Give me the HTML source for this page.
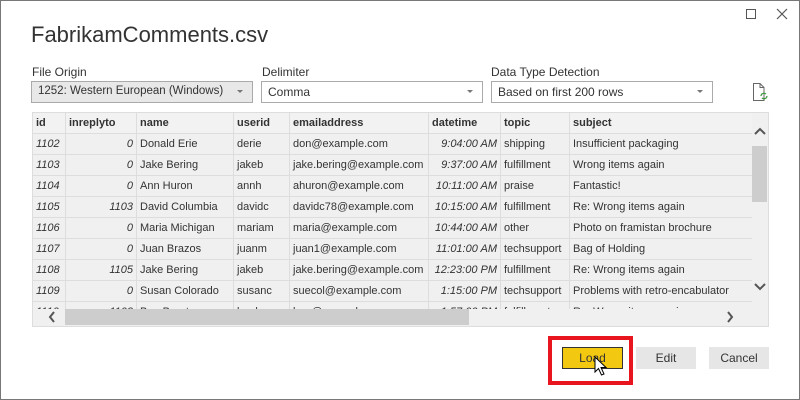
<!DOCTYPE html><html><head><style>
*{margin:0;padding:0;box-sizing:border-box}
body{width:800px;height:400px;background:#fff;font-family:"Liberation Sans",sans-serif;position:relative;overflow:hidden;font-size:11px;color:#333}
.win{position:absolute;left:0;top:0;width:800px;height:400px;border:1px solid #777}
.abs{position:absolute}
.lbl{font-size:12px;color:#333}
.dd{position:absolute;top:81px;height:22px;border:1px solid #aaa;font-size:12px;padding:3px 6px;color:#333;white-space:nowrap;overflow:hidden}
.dd:after{content:"";position:absolute;right:9px;top:8px;border-left:3px solid transparent;border-right:3px solid transparent;border-top:3px solid #777}
table{border-collapse:collapse;position:absolute;left:0;top:0;table-layout:fixed;width:720px}
td,th{height:21px;border:1px solid #ddd;padding:0 3px;white-space:nowrap;overflow:hidden;font-size:11px;text-align:left}
th{background:#f2f2f2;font-weight:bold;color:#333}
td.i{font-style:italic;text-align:right}
td.il{font-style:italic}
.btn{position:absolute;top:347px;height:22px;background:#e6e6e6;font-size:12px;text-align:center;line-height:22px;color:#333}
</style></head><body>
<div class="win"></div>
<div class="abs" style="left:746px;top:9px;width:10px;height:10px;border:1px solid #555"></div>
<svg class="abs" style="left:776px;top:8px" width="12" height="12"><path d="M1 1L11 11M11 1L1 11" stroke="#555" stroke-width="1.2"/></svg>
<div class="abs" style="left:31px;top:22px;font-size:22px;color:#333">FabrikamComments.csv</div>
<div class="abs lbl" style="left:32px;top:65px">File Origin</div>
<div class="abs lbl" style="left:262px;top:65px">Delimiter</div>
<div class="abs lbl" style="left:491px;top:65px">Data Type Detection</div>
<div class="dd" style="left:31px;width:222px;background:#e8e8e8;font-size:11.5px;padding-right:20px">1252: Western European (Windows)</div>
<div class="dd" style="left:261px;width:222px">Comma</div>
<div class="dd" style="left:491px;width:222px">Based on first 200 rows</div>
<svg class="abs" style="left:752px;top:82px" width="18" height="20"><path d="M1.5 1.5H8l4 4V18.5H1.5Z" fill="none" stroke="#666"/><path d="M8 1.5V5.5H12" fill="none" stroke="#666"/><path d="M9 14a3 3 0 0 1 5-2M15 14a3 3 0 0 1-5 2" fill="none" stroke="#3a9a3a" stroke-width="1.2"/></svg>
<div class="abs" style="left:32px;top:112px;width:737px;height:215px;border:1px solid #ddd;background:#f0f0f0"></div>
<div class="abs" style="left:32px;top:112px;width:720px;height:197px;overflow:hidden">
<table>
<colgroup><col style="width:33px"><col style="width:71px"><col style="width:97px"><col style="width:56px"><col style="width:139px"><col style="width:72px"><col style="width:69px"><col style="width:183px"></colgroup>
<tr><th>id</th><th>inreplyto</th><th>name</th><th>userid</th><th>emailaddress</th><th>datetime</th><th>topic</th><th>subject</th></tr>
<tr><td class="il">1102</td><td class="i">0</td><td>Donald Erie</td><td>derie</td><td>don@example.com</td><td class="i">9:04:00 AM</td><td>shipping</td><td>Insufficient packaging</td></tr>
<tr><td class="il">1103</td><td class="i">0</td><td>Jake Bering</td><td>jakeb</td><td>jake.bering@example.com</td><td class="i">9:37:00 AM</td><td>fulfillment</td><td>Wrong items again</td></tr>
<tr><td class="il">1104</td><td class="i">0</td><td>Ann Huron</td><td>annh</td><td>ahuron@example.com</td><td class="i">10:11:00 AM</td><td>praise</td><td>Fantastic!</td></tr>
<tr><td class="il">1105</td><td class="i">1103</td><td>David Columbia</td><td>davidc</td><td>davidc78@example.com</td><td class="i">10:15:00 AM</td><td>fulfillment</td><td>Re: Wrong items again</td></tr>
<tr><td class="il">1106</td><td class="i">0</td><td>Maria Michigan</td><td>mariam</td><td>maria@example.com</td><td class="i">10:44:00 AM</td><td>other</td><td>Photo on framistan brochure</td></tr>
<tr><td class="il">1107</td><td class="i">0</td><td>Juan Brazos</td><td>juanm</td><td>juan1@example.com</td><td class="i">11:01:00 AM</td><td>techsupport</td><td>Bag of Holding</td></tr>
<tr><td class="il">1108</td><td class="i">1105</td><td>Jake Bering</td><td>jakeb</td><td>jake.bering@example.com</td><td class="i">12:23:00 PM</td><td>fulfillment</td><td>Re: Wrong items again</td></tr>
<tr><td class="il">1109</td><td class="i">0</td><td>Susan Colorado</td><td>susanc</td><td>suecol@example.com</td><td class="i">1:15:00 PM</td><td>techsupport</td><td>Problems with retro-encabulator</td></tr>
<tr><td class="il">1110</td><td class="i">1103</td><td>Ben Brent</td><td>benb</td><td>ben@example.com</td><td class="i">1:57:00 PM</td><td>fulfillment</td><td>Re: Wrong items again</td></tr>
</table></div>
<div class="abs" style="left:752px;top:146px;width:15px;height:56px;background:#cdcdcd"></div>
<svg class="abs" style="left:752px;top:126px" width="16" height="12"><path d="M3 8L8 3L13 8" fill="none" stroke="#555" stroke-width="2"/></svg>
<svg class="abs" style="left:752px;top:280px" width="16" height="12"><path d="M3 4L8 9L13 4" fill="none" stroke="#555" stroke-width="2"/></svg>
<div class="abs" style="left:65px;top:309px;width:404px;height:16px;background:#cdcdcd"></div>
<svg class="abs" style="left:46px;top:310px" width="12" height="14"><path d="M8 2L4 7L8 12" fill="none" stroke="#555" stroke-width="2"/></svg>
<svg class="abs" style="left:724px;top:310px" width="12" height="14"><path d="M4 2L8 7L4 12" fill="none" stroke="#555" stroke-width="2"/></svg>
<div class="abs" style="left:548px;top:336px;width:85px;height:49px;border:4px solid #e8141e"></div>
<div class="btn" style="left:562px;width:61px;background:#f2c811;border:1px solid #333;line-height:20px">Load</div>
<div class="btn" style="left:636px;width:60px">Edit</div>
<div class="btn" style="left:709px;width:60px">Cancel</div>
<svg class="abs" style="left:594px;top:356px" width="14" height="22"><path d="M1 1V16L4.5 12.5L7.5 19L10 18L7 11.5H12Z" fill="#fff" stroke="#000" stroke-width="1"/></svg>
</body></html>
